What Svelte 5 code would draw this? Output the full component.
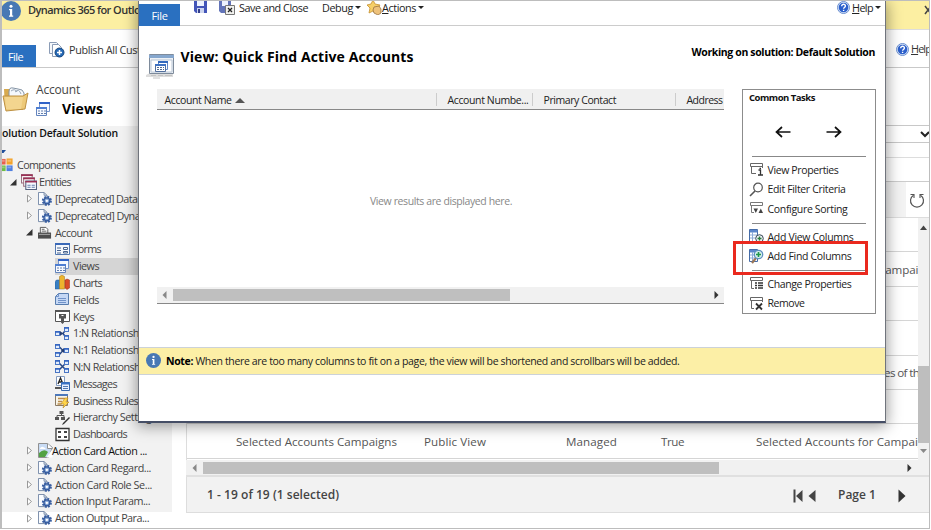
<script>
  // Tunes letter spacing so that a label takes up its column width.
  function fit(node, width) {
    const range = document.createRange();
    range.selectNodeContents(node);
    const natural = range.getBoundingClientRect().width;
    const count = node.textContent.length;
    node.style.letterSpacing = `${(width - natural) / count}px`;
  }

  const tree = [
    { level: 0, icon: 'components', text: 'Components', w: 58 },
    { level: 1, icon: 'entities', text: 'Entities', w: 32, arrow: 'open' },
    { level: 2, icon: 'entity', text: '[Deprecated] Data', w: 82.5, arrow: 'closed' },
    { level: 2, icon: 'entity', text: '[Deprecated] Dynamics', w: 106, arrow: 'closed' },
    { level: 2, icon: 'account', text: 'Account', w: 37, arrow: 'open' },
    { level: 3, icon: 'form', text: 'Forms', w: 28 },
    { level: 3, icon: 'views', text: 'Views', w: 26, selected: true },
    { level: 3, icon: 'charts', text: 'Charts', w: 29 },
    { level: 3, icon: 'fields', text: 'Fields', w: 26 },
    { level: 3, icon: 'keys', text: 'Keys', w: 21 },
    { level: 3, icon: 'rel1', text: '1:N Relationships', w: 79 },
    { level: 3, icon: 'rel2', text: 'N:1 Relationships', w: 79 },
    { level: 3, icon: 'rel3', text: 'N:N Relationships', w: 80 },
    { level: 3, icon: 'messages', text: 'Messages', w: 44 },
    { level: 3, icon: 'rules', text: 'Business Rules', w: 65 },
    { level: 3, icon: 'hierarchy', text: 'Hierarchy Settings', w: 83 },
    { level: 3, icon: 'dash', text: 'Dashboards', w: 54 },
    { level: 2, icon: 'broken', text: 'Action Card Action ...', w: 95, arrow: 'closed', dark: true },
    { level: 2, icon: 'entity', text: 'Action Card Regard...', w: 96, arrow: 'closed' },
    { level: 2, icon: 'entity', text: 'Action Card Role Se...', w: 97, arrow: 'closed' },
    { level: 2, icon: 'entity', text: 'Action Input Param...', w: 95, arrow: 'closed' },
    { level: 2, icon: 'entity', text: 'Action Output Para...', w: 94, arrow: 'closed' },
    { level: 2, icon: 'account', text: '', w: 0 }
  ];

  const peekRows = ['', 'Campaigns', '', '', 'es of the', ''];

  const tasks = [
    [
      { icon: 'props', text: 'View Properties', w: 71 },
      { icon: 'search', text: 'Edit Filter Criteria', w: 78 },
      { icon: 'sort', text: 'Configure Sorting', w: 80 }
    ],
    [
      { icon: 'addview', text: 'Add View Columns', w: 86 },
      { icon: 'addfind', text: 'Add Find Columns', w: 84 }
    ],
    [
      { icon: 'change', text: 'Change Properties', w: 84 },
      { icon: 'remove', text: 'Remove', w: 37 }
    ]
  ];
</script>

{#snippet info(size)}
  <svg width={size} height={size} viewBox="0 0 20 20">
    <circle cx="10" cy="10" r="10" fill="#4878b4" />
    <circle cx="10" cy="5.2" r="1.5" fill="#fff" />
    <path d="M8 8h3.2v6.5h1v1.3H8v-1.3h1V9.2H8z" fill="#fff" />
  </svg>
{/snippet}

{#snippet helpIcon()}
  <svg width="13" height="13" viewBox="0 0 13 13">
    <circle cx="6.5" cy="6.5" r="6" fill="#dce8f8" stroke="#6b8fd0" />
    <circle cx="6.5" cy="6.5" r="4.8" fill="#2b5fcc" />
    <path d="M4.7 5.2c0-2.6 3.8-2.4 3.7-.1 0 1.4-1.8 1.3-1.8 2.6M6.6 8.8v1.3" fill="none" stroke="#fff" stroke-width="1.4" />
  </svg>
{/snippet}

{#snippet cols()}
  <path d="M.5 12.5V.5h8v12z" fill="#fff" stroke="#456ca8" />
  <path d="M1 1h7.500v2.500H1z" fill="#5b87cc" />
  <path d="M3.500 3v9M1 6h7.500M1 9h7.500" stroke="#8cabd8" />
{/snippet}

{#snippet node(x, y)}
  <rect x={x + 0.5} y={y + 0.5} width="4" height="4" fill="#e3edfc" stroke="#4a76c4" />
  <path d={`M${x} ${y + 1}h5`} stroke="#3263c0" stroke-width="1.5" />
{/snippet}

{#snippet icon(name)}
  <svg class="icon" width="15" height="15" viewBox="0 0 15 15" fill="none">
    {#if name === 'components'}
      <path d="M0 1h6v6H0z" fill="#e8604c" /><path d="M7 .500h6.500V7H7z" fill="#f3a32c" />
      <path d="M0 8h6v6H0z" fill="#6dbd45" /><path d="M7 8h6.500v6H7z" fill="#4f7fe0" />
      <path d="M1 2h4v2H1zM8 2h4v2H8zM1 9h4v2H1zM8 9h4v2H8z" fill="#fff" opacity=".3" />
    {:else if name === 'entities'}
      <path d="M.500 .500h10v8H.500z" fill="#fff" stroke="#9b7080" /><path d="M0 1.200h11" stroke="#9c3055" stroke-width="1.500" />
      <path d="M2.500 3.500h10v8h-10z" fill="#fff" stroke="#9b7080" /><path d="M2 4.200h11" stroke="#9c3055" stroke-width="1.500" />
      <path d="M4.500 6.500h10v8h-10z" fill="#f7faff" stroke="#55627e" /><path d="M4 7.200h11" stroke="#9c3055" stroke-width="1.500" />
      <path d="M6 10.500h3m1 0h3m-7 2h3m1 0h3" stroke="#647fac" />
    {:else if name === 'entity'}
      <path d="M.500 .500h6l3 3v10h-9z" fill="#fafcff" stroke="#7185a4" /><path d="M6.500 .500v3h3" stroke="#7185a4" />
      <circle cx="9.500" cy="9.500" r="4.400" stroke="#3b61a4" stroke-width="2" stroke-dasharray="2 1.450" />
      <circle cx="9.500" cy="9.500" r="3.200" fill="#87a8d8" stroke="#34599b" stroke-width="1.400" /><circle cx="9.500" cy="9.500" r="1.300" fill="#fff" />
    {:else if name === 'account'}
      <path d="M2.500 8V1.500h6l2 2V8z" fill="#fff" stroke="#555" /><path d="M4 3.500h3M4 5.500h5" stroke="#555" />
      <path d="M0 7h14v6.500H0z" fill="#4d4d4d" /><path d="M1 9h12" stroke="#aaa" />
    {:else if name === 'form'}
      <path d="M.500 1.500h14v11H.500z" fill="#f5f8fd" stroke="#5278b0" /><path d="M0 2h15" stroke="#3a69b8" stroke-width="2" />
      <path d="M2 6h4M2 8.500h4M2 11h4" stroke="#49648f" /><path d="M8.500 5.500h4v2h-4zM8.500 9.500h4V11h-4z" stroke="#49648f" />
    {:else if name === 'views'}
      <path d="M3.500 .500h10v9h-10z" fill="#f6f9ff" stroke="#7594cb" /><path d="M3 1h11" stroke="#2f62c8" stroke-width="2" />
      <path d="M.500 5.500h10v8H.500z" fill="#f6f9ff" stroke="#6384bd" /><path d="M0 6h11" stroke="#4e7ed2" stroke-width="2" />
      <path d="M2 9h2m1 0h2m1 0h2M2 11.500h2m1 0h2m1 0h2" stroke="#647fac" />
    {:else if name === 'charts'}
      <path d="M0 6.500 1.500 5h3v9H0z" fill="#397fc2" stroke="#225a96" stroke-width=".500" />
      <path d="M4.500 1.500 7 0l2.500 1.500V14h-5z" fill="#edb42d" stroke="#9c7117" stroke-width=".500" />
      <path d="M10 5l2-1 2.500 1v8L12 14.500 10 13z" fill="#d84b27" stroke="#982d15" stroke-width=".500" />
    {:else if name === 'fields'}
      <path d="M3.500 1.500h10v11H.500v-8z" fill="#c5d8f5" stroke="#587dae" /><path d="M.500 4.500h3v-3M3 6.500h8M3 8.500h8M3 10.500h8" stroke="#7193c9" />
    {:else if name === 'keys'}
      <path d="M.500 1.500h14v11H.500z" fill="#fff" stroke="#555" /><path d="M0 2h15" stroke="#555" stroke-width="2" />
      <path d="M4 5h7v4.500H9v4L7.500 15 6 13.500v-4H4z" fill="#555" /><path d="M6.500 6.500h2" stroke="#fff" />
    {:else if name === 'rel1'}
      <path d="M4 7.500h4l3-4M8 7.500l3 4" stroke="#274786" stroke-width="1.400" />
      {@render node(0, 5)}{@render node(9, 1)}{@render node(9, 9)}<path d="m5 5 3 2.500-3 2.500z" fill="#253e72" />
    {:else if name === 'rel2'}
      <path d="M4 3.500l4 4h4M4 12l4-4.500" stroke="#274786" stroke-width="1.400" />
      {@render node(0, 1)}{@render node(0, 9)}{@render node(9, 5)}<path d="m9 5-3 2.500 3 2.500z" fill="#253e72" />
    {:else if name === 'rel3'}
      <path d="M3 3l9 9M3 12l9-9" stroke="#274786" stroke-width="1.500" />
      {@render node(0, 1)}{@render node(0, 9)}{@render node(9, 1)}{@render node(9, 9)}
    {:else if name === 'messages'}
      <path d="M1.500 .500h8v9h-8z" fill="#fff" stroke="#829ac0" /><path d="m3 8 2.500-6L8 8M4 6h3M0 12h6" stroke="#222" stroke-width="1.300" />
      <path d="M6.500 6.500h8v8h-8z" fill="#e7f0ff" stroke="#3768ad" /><path d="M6 7.500h9" stroke="#3972c5" stroke-width="2" /><path d="M8 10.500h5M8 12.500h5" stroke="#5279b3" />
    {:else if name === 'rules'}
      <path d="M.500 1.500h12v11H.500z" fill="#f7f4e8" stroke="#8b7a64" /><path d="M0 2h13" stroke="#4c78bb" stroke-width="2" />
      <path d="M3 5.500h7M3 8.500h4M2.500 11h4" stroke="#bb8c4d" stroke-width="1.300" /><path d="m10 5-4 6h3l-1 4 6-6h-3l2-4z" fill="#ffd54a" stroke="#b18220" stroke-width=".600" />
    {:else if name === 'hierarchy'}
      <path d="M4.500 1h4v3h-4zM0 7h4v3H0zM6 7h4v3H6z" fill="#555" /><path d="M6.500 4v2M2 7V5.500h7V7" stroke="#555" /><path d="m14 7-6 6-1 2 2-1 6-6z" fill="#333" />
    {:else if name === 'dash'}
      <path d="M1 1.500h13v12H1z" fill="#fff" stroke="#333" stroke-width="1.300" /><path d="M3 4h3v2H3zM9 4h3v2H9zM3 9h3v2H3zM9 9h3v2H9z" fill="#444" />
    {:else if name === 'broken'}
      <path d="M.500 .500h9l5 4-4 10h-10z" fill="#c9dcf5" stroke="#919191" /><path d="M9.500 .500v5h5" fill="#fff" stroke="#919191" />
      <path d="M1 14V10q5-5 9-1l-3 5z" fill="#52a244" /><path d="M2 5.500q1.500-3 4-1 2 0 1.500 1.500H2z" fill="#fff" /><path d="m14.500 6-6 8.500h6z" fill="#fff" />
    {:else if name === 'props'}
      <path d="M7 11.500H2.500v-7M1.500 1.500h12v3h-12zM13.500 4v2" stroke="#666" /><path d="M9.500 8h2v5m-2.500 0h5" stroke="#333" stroke-width="1.300" /><path d="M10.500 5.700h1.500v1.300h-1.500z" fill="#333" />
    {:else if name === 'search'}
      <circle cx="9" cy="5.500" r="4.300" stroke="#555" stroke-width="1.200" /><path d="m6 9-5 5" stroke="#555" stroke-width="1.600" />
    {:else if name === 'sort'}
      <path d="M5 11.500H2.500v-7M1.500 1.500h12v3h-12z" stroke="#777" /><path d="M4.500 7.500h4.500l-2.200 4.500zM9.500 12H14l-2.200-4.500z" fill="#444" />
    {:else if name === 'addview'}
      {@render cols()}<circle cx="10.500" cy="9.500" r="3.800" fill="#e9f0f3" stroke="#3b4856" /><path d="M8.500 9.500h4M10.500 7.500v4" stroke="#27793a" stroke-width="1.300" />
    {:else if name === 'addfind'}
      {@render cols()}<path d="m7 9-4 5" stroke="#9b7758" stroke-width="2.200" /><circle cx="9.500" cy="5.500" r="4.200" fill="#d9f0ef" stroke="#5d91c0" stroke-width="1.300" /><path d="M7 5.500h5M9.500 3v5" stroke="#20964a" stroke-width="1.600" />
    {:else if name === 'change'}
      <path d="M5 12.500H2.500v-8M1.500 1.500h12v3h-12z" stroke="#666" /><path d="M6 7h2m1 0h5M6 9.500h2m1 0h5M6 12h2m1 0h5" stroke="#333" stroke-width="1.400" />
    {:else if name === 'remove'}
      <path d="M5 12.500H2.500v-8M1.500 1.500h12v3h-12zM13.500 4v2" stroke="#666" /><path d="m7 7.500 6 6m0-6-6 6" stroke="#333" stroke-width="1.800" />
    {/if}
  </svg>
{/snippet}

<div class="shot">
  <div class="notice">
    {@render info(20)}
    <b use:fit={124}>Dynamics 365 for Outlook</b>
    <svg class="close" width="8" height="10" viewBox="0 0 8 10"><path d="M1 1l6 8M7 1L1 9" stroke="#444" stroke-width="1.500" /></svg>
  </div>

  <div class="ribbon">
    <div class="tab"><span use:fit={15}>File</span></div>
    <div class="publish">
      <svg width="16" height="16" viewBox="0 0 16 16" fill="none">
        <path d="M.500 .500h7l2 2v9h-9z" fill="#f4f7fb" stroke="#8b9cb6" /><path d="M3.500 2.500h6l3 3v9h-9z" fill="#fff" stroke="#8b9cb6" />
        <circle cx="10.500" cy="10.500" r="4.500" fill="#2568b5" stroke="#17477e" /><path d="M8 10.500h5M10.500 8v5" stroke="#fff" stroke-width="1.500" />
      </svg>
      <span use:fit={123}>Publish All Customizations</span>
    </div>
    <div class="outerhelp">{@render helpIcon()}<span use:fit={20}><u>H</u>elp</span></div>
  </div>

  <div class="body">
    <aside>
      <header>
        <svg width="27" height="28" viewBox="0 0 27 28">
          <path d="M2 4h7l2 3h10v18L3 23z" fill="#d7aa4f" />
          <path d="M7 7q0-5 4-4l5 1 4 1 2 3v12H7z" fill="#f5f8fc" stroke="#8493a4" />
          <path d="M9 6q4-3 6 1M13 7q4-4 6 2" fill="none" stroke="#9ba9b8" />
          <path d="M1 11h20l5-3-3 16-19 2z" fill="#edc979" stroke="#be9142" />
          <path d="M3 12h18l-2 12H4z" fill="#f9e1a5" opacity=".5" />
        </svg>
        <div class="heads">
          <span class="acct" use:fit={44}>Account</span>
          <div class="viewhead">{@render icon('views')}<b use:fit={41}>Views</b></div>
        </div>
      </header>
      <div class="treepane">
        <b class="solution" use:fit={116}>olution Default Solution</b>
        <svg class="mark" width="5" height="4" viewBox="0 0 5 4"><path d="M0 0h4L1.500 3H0z" fill="#204f9b" /></svg>
        <div class="tree">
          {#each tree as item}
            <div class="item level{item.level}" class:selected={item.selected} class:dark={item.dark}>
              {#if item.arrow}
                <svg class="arrow" width="8" height="9" viewBox="0 0 8 9">
                  {#if item.arrow === 'open'}<path d="M6.500 1v6.500H0z" fill="#333" />
                  {:else}<path d="M1.500 1v7L5.500 4.500z" fill="#fff" stroke="#999" />{/if}
                </svg>
              {/if}
              {@render icon(item.icon)}
              {#if item.text}<span use:fit={item.w}>{item.text}</span>{/if}
            </div>
          {/each}
        </div>
      </div>
    </aside>

    <main>
      <div class="picker"><svg width="10" height="7" viewBox="0 0 10 7"><path d="M1 1l4 4 4-4" fill="none" stroke="#222" stroke-width="2" /></svg></div>
      <div class="spacer"></div>
      <div class="gap"></div>
      <div class="refresh">
        <svg width="16" height="18" viewBox="0 0 16 18" fill="none" stroke="#555" stroke-width="1.200"><path d="M4.500 4.200A6.500 6.500 0 1 0 11.500 4.200" /><path d="M1.500 3.500h3.500v3.500M14.500 3.500H11v3.500" stroke-width="1.100" /></svg>
      </div>
      <div class="gridwrap">
        <div class="rows">
          {#each peekRows as text}
            <div class="row peek">{#if text}<span use:fit={text === 'Campaigns' ? 59 : 41}>{text}</span>{/if}</div>
          {/each}
          <div class="row last">
            <div class="c1"><span use:fit={161}>Selected Accounts Campaigns</span></div>
            <div class="c2"><span use:fit={62}>Public View</span></div>
            <div class="c3"><span use:fit={51}>Managed</span></div>
            <div class="c4"><span use:fit={23}>True</span></div>
            <div class="c5"><span use:fit={181}>Selected Accounts for Campaigns</span></div>
          </div>
        </div>
        <div class="vbar">
          <svg width="7" height="5" viewBox="0 0 7 5"><path d="M0 5h7L3.500 .500z" fill="#444" /></svg>
          <i></i>
          <svg width="7" height="5" viewBox="0 0 7 5"><path d="M0 0h7L3.500 4z" fill="#888" /></svg>
        </div>
      </div>
      <div class="hbar outer">
        <svg width="5" height="8" viewBox="0 0 5 8"><path d="M4.500 0v8L.500 4z" fill="#888" /></svg><i></i>
        <svg width="5" height="8" viewBox="0 0 5 8"><path d="M.500 0v8l4-4z" fill="#333" /></svg>
      </div>
      <footer>
        <b class="count" use:fit={132}>1 - 19 of 19 (1 selected)</b>
        <div class="pager">
          <svg width="10" height="14" viewBox="0 0 10 14"><path d="M.500 .500h2v13h-2zM9.500 1v12L3 7z" fill="#444" /></svg>
          <svg width="8" height="14" viewBox="0 0 8 14"><path d="M7.500 1v12L.500 7z" fill="#444" /></svg>
          <b use:fit={38}>Page 1</b>
          <svg width="8" height="14" viewBox="0 0 8 14"><path d="M.500 .500v13L7.500 7z" fill="#333" /></svg>
        </div>
      </footer>
    </main>
  </div>

  <section class="dialog">
    <div class="toolbar">
      <div class="tab"><span use:fit={16}>File</span></div>
      <svg class="save" width="13" height="13" viewBox="0 0 13 13"><path d="M0 0h13v13H2l-2-2z" fill="#4355b8" /><path d="M3 0h7v6H3z" fill="#eef3ff" /><path d="M3 8h7v5H3z" fill="#ccd4ee" /><path d="M4 9h2v4H4z" fill="#34408b" /></svg>
      <svg class="saveclose" width="16" height="14" viewBox="0 0 16 14"><path d="M0 0h12v12H2l-2-2z" fill="#6374b9" /><path d="M3 0h6v5H3z" fill="#eef3ff" /><path d="M6.500 4.500h9v9h-9z" fill="#f1f1ee" stroke="#777" /><path d="m9 7 4 4m0-4-4 4" stroke="#222" stroke-width="1.300" /></svg>
      <span class="saveText" use:fit={69}>Save and Close</span>
      <span class="debug" use:fit={31}>Debug</span><i class="caret"></i>
      <svg class="star" width="15" height="15" viewBox="0 0 15 15"><path d="m6 0 2 4 5 1-3 4 .500 4L6 11l-4 2 1-5-3-3 4-1z" fill="#f6cf68" stroke="#c7902f" stroke-width=".800" /><path d="m7 7 5-1 2 3v4l-3 2-4-2-1-3z" fill="#eec27c" stroke="#9a7440" stroke-width=".800" /></svg>
      <span use:fit={34}><u>A</u>ctions</span><i class="caret"></i>
      <div class="help">{@render helpIcon()}<span use:fit={21}><u>H</u>elp</span><i class="caret"></i></div>
    </div>

    <div class="titlebar">
      <svg class="ticon" width="31" height="28" viewBox="0 0 31 28" fill="none">
        <path d="m5 20-4 2v2h27v-3z" fill="#ddd" />
        <path d="M4.500 1.500h24v19h-24z" fill="#edf1f6" stroke="#7e8b9b" /><path d="M4 2h25v3H4z" fill="#86a7ce" /><path d="M6 7h21v12H6z" fill="#fff" stroke="#b8c5d4" />
        <path d="M13.500 8.500h9v8h-9z" fill="#fff" stroke="#6288c6" /><path d="M13 9h10" stroke="#346abe" stroke-width="2" /><path d="M10.500 11.500h10v7h-10z" fill="#fff" stroke="#526f9d" /><path d="M10 12h11" stroke="#3f72c2" stroke-width="2" /><path d="M12 14.500h7M12 16.500h7" stroke="#536b90" stroke-dasharray="2 1" />
        <path d="M6 22.500h5m2 0h5m2 0h7M8 25h7" stroke="#c4c4c4" />
      </svg>
      <h1 use:fit={233}>View: Quick Find Active Accounts</h1>
      <b class="working" use:fit={183.5}>Working on solution: Default Solution</b>
    </div>

    <div class="content">
      <div class="table">
        <div class="thead">
          <div class="h1c"><span use:fit={67}>Account Name</span><i class="up"></i></div>
          <div class="h2c"><span use:fit={81}>Account Numbe...</span></div>
          <div class="h3c"><span use:fit={72.500}>Primary Contact</span></div>
          <div class="h4c"><span use:fit={36}>Address</span></div>
        </div>
        <div class="empty"><span use:fit={142}>View results are displayed here.</span></div>
        <div class="hbar inner">
          <svg width="5" height="8" viewBox="0 0 5 8"><path d="M4.500 0v8L.500 4z" fill="#888" /></svg><i></i>
          <svg width="5" height="8" viewBox="0 0 5 8"><path d="M.500 0v8l4-4z" fill="#333" /></svg>
        </div>
      </div>

      <div class="tasks">
        <b class="ct" use:fit={66}>Common Tasks</b>
        <div class="arrows">
          <svg width="16" height="12" viewBox="0 0 16 12"><path d="M15.500 6H2M7 1L1.500 6 7 11" fill="none" stroke="#111" stroke-width="1.700" /></svg>
          <svg width="16" height="12" viewBox="0 0 16 12"><path d="M.500 6H14M9 1l5.500 5L9 11" fill="none" stroke="#111" stroke-width="1.700" /></svg>
        </div>
        {#each tasks as group}
          <div class="group">
            {#each group as task}
              <div class="task">{@render icon(task.icon)}<span use:fit={task.w}>{task.text}</span></div>
            {/each}
          </div>
        {/each}
      </div>
    </div>

    <div class="note">
      {@render info(15)}
      <span use:fit={513.5}><b>Note:</b> When there are too many columns to fit on a page, the view will be shortened and scrollbars will be added.</span>
    </div>
  </section>
  <div class="highlight"></div>
</div>

<style>
  :global(body) { margin: 0; background: #fff; }
  * { box-sizing: border-box; }
  svg, i { flex: none; display: block; }
  span, b, h1 { white-space: nowrap; flex: none; }
  u { text-underline-offset: 1px; text-decoration-thickness: 1px; }

  .shot {
    position: relative;
    width: 930px;
    height: 529px;
    overflow: hidden;
    border: 1px solid #bdbdbd;
    border-left-width: 2px;
    background: #fff;
    color: #444;
    font: 10.800px/16px "Open Sans", "Noto Sans", sans-serif;
    display: flex;
    flex-direction: column;
  }
  .shot > * { flex: none; }

  .notice { height: 28px; background: #fcefa2; display: flex; color: #333; }
  .notice > :global(svg:first-child) { margin-left: -1px; }
  .notice b { margin: 1px auto 0 7px; font-size: 11px; font-weight: 600; }
  .close { margin: 4px -3px 0 0; }

  .ribbon { height: 39px; border-top: 1px solid #ddd; border-bottom: 1px solid #c9c9c9; display: flex; align-items: flex-end; color: #333; }
  .tab { background: #2a70c0; color: #fff; display: flex; justify-content: center; align-items: center; font-size: 11px; flex: none; }
  .ribbon .tab { width: 34px; height: 22px; padding-right: 7px; padding-top: 2px; }
  .publish { display: flex; align-items: center; gap: 4px; margin: 0 0 9px 13px; }
  .outerhelp { display: flex; align-items: center; gap: 2px; margin: 0 -2px 10px auto; }

  .body { display: flex; height: 459px; }
  aside { width: 184px; flex: none; display: flex; flex-direction: column; }
  header { height: 58px; flex: none; display: flex; padding: 17px 0 0 0; gap: 7px; }
  .heads { display: flex; flex-direction: column; margin-top: -3px; }
  .acct { font-size: 12px; line-height: 16px; align-self: flex-start; }
  .viewhead { display: flex; align-items: center; height: 22px; gap: 11px; color: #000; }
  .viewhead b { font-size: 14px; }
  .treepane { width: 170px; height: 386px; background: #f2f2f2; display: flex; flex-direction: column; align-items: flex-start; }
  .solution { color: #111; font-size: 10.500px; line-height: 15px; font-weight: 600; }
  .mark { margin: 9px 0 3px; }
  .tree { width: 170px; }
  .item { height: 16.810px; display: flex; align-items: center; }
  .item > :global(.icon) { margin-right: 3px; width: 14px; height: 14px; }
  .level0 > :global(.icon) { margin-left: -2px; }
  .level1 { padding-left: 8px; }
  .level1 > :global(.icon) { width: 16px; height: 16px; margin-right: 2px; }
  .level2 { padding-left: 24px; }
  .level3 { padding-left: 54px; }
  .arrow { margin-right: 3px; }
  .level2 .arrow { margin-right: 4px; }
  .level3 > :global(.icon) { width: 15px; height: 15px; margin-left: -1px; }
  .selected { background: linear-gradient(90deg, transparent 53px, #d5d5d5 53px); }
  .dark { color: #111; }
  .dark > :global(.icon) { width: 15px; height: 15px; margin: 0 -1px 0 0; }

  main { flex: 1; min-width: 0; display: flex; flex-direction: column; padding-top: 57px; }
  main > * { flex: none; }
  .picker { height: 18px; border: 1px solid #c8c8c8; border-right: 0; display: flex; justify-content: flex-end; align-items: center; }
  .picker svg { margin-right: -1px; }
  .spacer { height: 15px; border-bottom: 1px solid #ddd; }
  .gap { height: 24px; border-bottom: 1px solid #ccc; }
  .refresh { height: 36px; border-bottom: 1px solid #ddd; display: flex; align-items: center; justify-content: flex-end; padding-right: 4px; background: linear-gradient(90deg, #f3f3f3 720px, #fff 720px); }
  .gridwrap { display: flex; height: 242px; }
  .rows { width: 732px; display: flex; flex-direction: column; overflow: hidden; font-size: 11.600px; border-left: 1px solid #ddd; }
  .row { height: 34.400px; padding-top: 2px; border-bottom: 1px solid #d5d5d5; display: flex; align-items: center; flex: none; color: #555; }
  .peek { padding-left: 691px; }
  .peek:nth-child(5) { padding-left: 697px; }
  .c1 { margin-left: 49px; width: 188px; }
  .c2 { width: 142px; }
  .c3 { width: 95px; }
  .c4 { width: 95px; }
  .c1, .c2, .c3, .c4 { flex: none; }
  .vbar { flex: 1; background: #f1f1f1; display: flex; flex-direction: column; align-items: center; padding: 7px 0 6px; }
  .vbar i { width: 100%; height: 77px; margin: auto 0 6px; background: #bebebe; }
  .hbar { display: flex; align-items: center; background: #f1f1f1; }
  .hbar i { background: #bfbfbf; height: 12px; }
  .hbar svg:last-child { margin-left: auto; }
  .outer { height: 17px; border-bottom: 2px solid #e0e0e0; padding: 0 17px 0 6px; }
  .outer i { width: 516px; margin-left: 6px; }
  footer { height: 36px; background: #f2f2f2; border-bottom: 1px solid #ddd; border-left: 1px solid #ddd; display: flex; align-items: center; justify-content: space-between; padding: 1px 23px 0 20px; color: #444; }
  footer b { font-size: 12px; font-weight: 600; }
  .pager { display: flex; align-items: center; }
  .pager svg { margin-top: 2px; }
  .pager svg:nth-child(2) { margin: 2px 22px 0 5px; }
  .pager svg:last-child { margin-left: 22px; }

  .dialog {
    position: absolute;
    left: 136px;
    top: 0;
    width: 748px;
    height: 422px;
    background: #fff;
    border: 1px solid #70747c;
    border-top: 0;
    border-bottom: 2px solid #454e66;
    box-shadow: 0 2px 14px 1px rgba(0, 0, 0, .4);
    color: #222;
  }
  .toolbar { height: 25px; display: flex; align-items: flex-start; border-bottom: 1px solid #ccc; line-height: 13px; }
  .toolbar > * { flex: none; }
  .toolbar .tab { width: 41px; height: 22px; margin-top: 3px; padding-top: 1px; }
  .save { margin: -1px 0 0 14px; }
  .saveclose { margin: 0 4px 0 12px; }
  .debug { margin-left: 14px; }
  .caret { border: 3px solid transparent; border-top-color: #222; border-bottom: 0; margin: 5px 0 0 2px; }
  .star { margin: -1px 0 0 6px; }
  .star + span { margin-left: 0; }
  .help { display: flex; margin-left: auto; padding-right: 4px; }
  .help span { margin-left: 2px; }
  .toolbar > span { margin-top: -.500px; }

  .titlebar { height: 63px; display: flex; color: #000; }
  .ticon { margin: 27px 0 0 6px; }
  h1 { margin: 20px 0 0 4.500px; font-size: 14px; line-height: 22px; font-weight: 700; }
  .working { margin: 17px 10px 0 auto; font-size: 10.500px; font-weight: 700; line-height: 18px; }

  .content { height: 258px; display: flex; padding-left: 18px; }
  .table { width: 567px; height: 215px; display: flex; flex-direction: column; }
  .thead { height: 21px; flex: none; display: flex; align-items: center; background: #f0f0f0; border-bottom: 1px solid #888; overflow: hidden; font-size: 10.500px; }
  .thead > div { display: flex; align-items: center; height: 13px; flex: none; }
  .thead span { padding-top: 1px; }
  .h1c { padding-left: 7.500px; width: 279px; }
  .h2c { padding-left: 10.500px; width: 96px; border-left: 1px solid #ccc; }
  .h3c { padding-left: 10.500px; width: 143px; border-left: 1px solid #ccc; }
  .h4c { padding-left: 10.500px; border-left: 1px solid #ccc; }
  .up { border: 5px solid transparent; border-bottom-color: #555; border-top: 0; margin: 2px 0 0 3px; }
  .empty { flex: 1; display: flex; justify-content: center; align-items: center; color: #888; padding: 5px 0 0 1px; font-size: 10.500px; }
  .inner { height: 17px; padding: 0 5px; border-bottom: 1px solid #888; }
  .inner i { width: 337px; margin-left: 6px; }

  .tasks { width: 134px; height: 225px; margin-left: 18px; border: 1px solid #8c8c8c; display: flex; flex-direction: column; font-size: 10.500px; }
  .tasks > * { flex: none; }
  .ct { margin-left: 6px; line-height: 15px; font-size: 9.500px; align-self: flex-start; color: #111; }
  .arrows { height: 51px; padding: 21px 0 0 32px; display: flex; gap: 35px; }
  .group { padding-top: 4px; height: 67px; }
  .group::before { content: ""; display: block; width: 114px; margin: -4px 0 3px 9px; border-top: 1px solid #888; }
  .group:nth-of-type(3) { height: 47px; }
  .group:nth-of-type(4) { height: 44px; }
  .task { display: flex; align-items: center; height: 19.500px; padding-left: 6px; gap: 3.500px; }

  .note { height: 28px; border: solid #ccd2d8; border-width: 1px 0; background: #fcefa6; display: flex; align-items: center; gap: 5px; padding: 0 0 1px 7px; font-size: 10.500px; }
  .note b { color: #000; }

  .highlight { position: absolute; left: 731px; top: 240px; width: 135px; height: 34px; border: 3px solid #ea291e; }
</style>
